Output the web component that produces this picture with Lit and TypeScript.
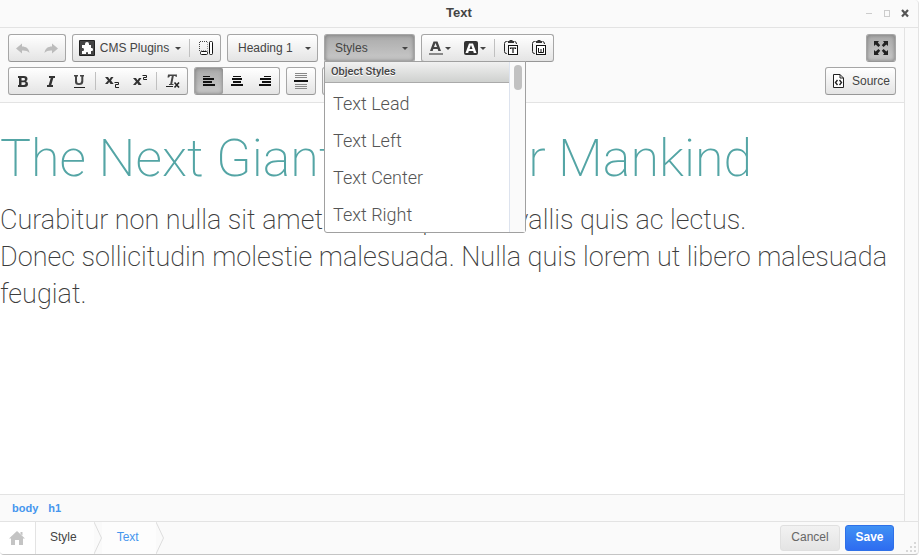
import { LitElement, html, css, svg, TemplateResult } from "lit";
import { customElement, property, state } from "lit/decorators.js";
import { classMap } from "lit/directives/class-map.js";

const bars = (rows: number[][], fill = "#111") =>
  rows.map(([x, y, w, h]) => svg`<rect x=${x} y=${y} width=${w} height=${h || 1} fill=${fill} />`);

const undoPath = "M1 8.5 7 3.5V6.5C11 6.500 14 8.500 14.500 13C12.500 10.800 10 10.300 7 10.500V13.500Z";
const fontA = "M5.500 1.500H9.500L13 11H10.300L9.700 9H5.300L4.700 11H2ZM6 7H9L7.500 3Z";
const clip = svg`<path d="M4.500 1.500H3.500Q1.500 1.500 1.500 3.500V11.500Q1.500 13.500 3.500 13.500H4M11.500 1.500Q13.500 1.500 13.500 4" fill="none" stroke="#222"/><path d="M5 1H6.500V0H9.500V1H11V3H5Z" fill="#333"/><rect x="5.500" y="5.500" width="9" height="9" fill="#fff" stroke="#111"/>`;

const icons: Record<string, TemplateResult> = {
  undo: svg`<path d=${undoPath} fill="#bcbcbc"/>`,
  redo: svg`<path d=${undoPath} fill="#bcbcbc" transform="matrix(-1 0 0 1 16 0)"/>`,
  plugin: svg`<rect width="16" height="16" rx="1" fill="#222"/><rect x="1" y="1" width="14" height="14" fill="#444"/><path d="M3 5H6V4Q6 2 8 2T10 4V5H12V8H13Q14 8 14 9.500T13 11H12V14H9V13Q9 12 8 12T7 13V14H3V11H4Q5 11 5 9.500T4 8H3Z" fill="#fff"/>`,
  blocks: svg`<path d="M1.500 11V1.500H9" fill="none" stroke="#444" stroke-dasharray="1 1"/><path d="M9.500 2V10.500H2" fill="none" stroke="#999" stroke-dasharray="1 1"/><rect x="2.500" y="11.500" width="7" height="3" rx="1" fill="#fff" stroke="#111"/><rect x="11.500" y="1.500" width="3" height="13" rx="1" fill="#fff" stroke="#111"/>`,
  bold: svg`<path fill-rule="evenodd" d="M3 3H9Q12.500 3 12.500 6Q12.500 7.500 11 8.200Q13 9 13 11Q13 14 9.500 14H3V12H4V5H3ZM6.500 5V7.500H8.500Q10 7.500 10 6.200T8.500 5ZM6.500 9.300V12H9Q10.500 12 10.500 10.600T9 9.300Z" fill="#333"/>`,
  italic: svg`<path d="M6 3H12V5H10.300L8.300 12H10V14H4V12H5.700L7.700 5H6Z" fill="#333"/>`,
  underline: svg`<path d="M3 2H7V3.500H6V8Q6 10.300 8 10.300T10.300 8V3.500H9V2H13V3.500H12.300V8.500Q12.300 12 8 12T4 8.500V3.500H3Z" fill="#444"/><rect x="3" y="14" width="11" height="1" fill="#222"/>`,
  sub: svg`<path d="M1 4H4L5.500 6.200 7 4H9.500L7 7.500 9.700 11H6.500L5.200 9 3.700 11H1L4 7.500Z" fill="#333"/><path d="M10.500 9.500H14.500V11.500H11.500V14.500H15" fill="none" stroke="#222"/>`,
  sup: svg`<path d="M1 5H4L5.500 7.200 7 5H9.500L7 8.500 9.700 12H6.500L5.200 10 3.700 12H1L4 8.500Z" fill="#333"/><path d="M10.500 2.500H14.500V4.500H11.500V6.500H15" fill="none" stroke="#222"/>`,
  clear: svg`<path d="M3 1.500H12L11.700 4H10.700L10.500 3H8.800L7.200 11H8.500V12H4V11H5.200L6.800 3H5L4 4.500H2.500Z" fill="#444"/><rect x="1" y="13" width="7" height="1" fill="#222"/><path d="M9.500 9.500 14 14.500M14 9.500 9.500 14.500" stroke="#222" stroke-width="1.600"/>`,
  left: bars([[2, 3, 7, 1], [2, 5, 11, 2], [2, 8, 9, 2], [2, 11, 12, 2]]),
  center: bars([[4, 3, 8, 1], [3, 5, 10, 2], [4, 8, 8, 2], [2, 11, 12, 2]]),
  right: bars([[7, 3, 7, 1], [3, 5, 11, 2], [5, 8, 9, 2], [2, 11, 12, 2]]),
  rule: svg`${bars([[2, 0, 12], [2, 2, 12], [2, 4, 12], [2, 11, 12], [2, 13, 12], [2, 15, 12]], "#888")}<rect x="1" y="7" width="14" height="2" fill="#111"/>`,
  color: svg`<path fill-rule="evenodd" d=${fontA} fill="#444"/><rect x="1" y="13" width="14" height="2" fill="#888"/>`,
  bgcolor: svg`<rect x="1" y="1" width="14" height="14" rx="2" fill="#333"/><path fill-rule="evenodd" d=${fontA} fill="#fff" transform="translate(.5 2)"/>`,
  pasteText: svg`${clip}<path d="M7.500 9V8H12.500V9M10 8V13" fill="none" stroke="#111" stroke-width="1.200"/>`,
  pasteWord: svg`${clip}<path d="M7.500 8V12.500H12.500V8M10 9V12" fill="none" stroke="#111"/>`,
  maximize: svg`<path d="M1 1H6L4.800 2.600 7.200 5.200 5.400 7 2.700 4.600 1 6ZM15 1H10L11.200 2.600 8.800 5.200 10.600 7 13.300 4.600 15 6ZM1 15H6L4.800 13.400 7.200 10.800 5.400 9 2.700 11.400 1 10ZM15 15H10L11.200 13.400 8.800 10.800 10.600 9 13.300 11.400 15 10Z" fill="#222"/>`,
  source: svg`<path d="M2.500 1.500H9L12.500 5V14.500H2.500Z" fill="#fff" stroke="#222"/><path d="M9 1.500V5H12.500" fill="none" stroke="#222"/><path d="M6.500 7 4.500 9.500 6.500 12M8.500 7 10.500 9.500 8.500 12" fill="none" stroke="#222" stroke-width="1.400"/>`,
  home: svg`<path d="M8 1 16 8.500H14V15H10V10H6V15H2V8.500H0ZM11.500 2H13.500V5.500L11.500 4Z" fill="#c4c4c4"/>`,
  minimize: svg`<rect x="5" y="8" width="6" height="1" fill="#ccc"/>`,
  restore: svg`<rect x="5.500" y="5.500" width="5" height="6" fill="none" stroke="#ccc"/>`,
  close: svg`<path d="M5 5 11 11.500M11 5 5 11.500" stroke="#555" stroke-width="2.200"/>`,
};

@customElement("ui-icon")
export class UiIcon extends LitElement {
  @property() name = "";
  static styles = css`
    :host { display: block; flex: none; width: 16px; height: 16px; }
    .glyph { display: block; }
  `;
  render() {
    return html`<svg class="glyph" width="16" height="16" viewBox="0 0 16 16" aria-hidden="true">${icons[this.name]}</svg>`;
  }
}

@customElement("app-root")
export class AppRoot extends LitElement {
  @state() private stylesOpen = true;

  static styles = css`
    :host { display: block; font: 12px/16px "Liberation Sans", Arial, sans-serif; color: #444; }
    * { box-sizing: border-box; }
    button, select { font: inherit; color: inherit; margin: 0; cursor: pointer; }
    .window { min-height: 100vh; display: flex; flex-direction: column; background: #fafafa; border-right: 1px solid #e3e3e3; border-bottom: 1px solid #c4c4c4; border-radius: 0 4px 4px 4px; overflow: hidden; }
    .titlebar { display: grid; grid-template-columns: 1fr auto 1fr; align-items: center; height: 28px; padding-bottom: 1px; border-bottom: 1px solid #e3e3e3; }
    .title { grid-column: 2; margin: 0; font-size: 13px; font-weight: bold; }
    .controls { justify-self: end; display: flex; gap: 2px; padding-right: 5px; }
    .plain { border: 0; padding: 0; background: none; }
    .main { flex: 1; display: flex; flex-direction: column; margin-right: 13px; border-right: 1px solid #e3e3e3; }
    .toolbar { display: flex; flex-direction: column; gap: 5px; padding: 6px 8px 7px; border-bottom: 1px solid #e3e3e3; }
    .row { display: flex; gap: 6px; height: 28px; }
    .group { display: flex; border: 1px solid #a6a6a6; border-bottom-color: #979797; border-radius: 3px; background: linear-gradient(#fff, #e4e4e4); position: relative; }
    .end { margin-left: auto; }
    .tool { display: flex; align-items: center; justify-content: center; gap: 5px; width: 28px; height: 26px; padding: 0; border: 0; background: none; white-space: nowrap; }
    .sep { width: 1px; margin: 4px 2px; background: #c0c0c0; }
    .wide { width: 114px; }
    .drop { width: 35px; gap: 1px; padding-right: 1px; }
    .combo { width: 89px; justify-content: space-between; padding: 0 6px 0 10px; }
    .source { width: 69px; }
    .on { background: linear-gradient(#aaa, #c9c9c9); box-shadow: inset 0 0 4px #777; border-radius: 2px; }
    .arrow { border: 3px solid transparent; border-top-color: #444; border-bottom: 0; }
    .wide .arrow { margin-left: 1px; }
    .select { display: flex; align-items: center; padding-right: 6px; }
    .format { appearance: none; width: 77px; height: 26px; border: 0; outline: 0; padding: 0 0 0 10px; background: none; }
    .panel { position: absolute; z-index: 2; top: 26px; left: -1px; width: 202px; height: 172px; display: flex; background: #fff; border: 1px solid #a0a0a0; border-radius: 0 0 3px 3px; font-family: Roboto, sans-serif; }
    .list { flex: 1; overflow: hidden; border-right: 1px solid #dde3ee; }
    .caption { margin: 0; height: 21px; padding: 0 6px; border-bottom: 1px solid #aaa; background: linear-gradient(#f1f1f1, #cfd1cf); font-size: 11px; line-height: 20px; font-weight: 500; text-shadow: 0 1px 0 #fff; }
    .options { margin: 0; padding: 2px 0 0; list-style: none; }
    .option { height: 37px; padding: 0 8px; font-size: 18px; line-height: 37px; font-weight: 300; color: #555; }
    .track { width: 15px; padding: 3px; background: #fafafa; }
    .thumb { width: 8px; height: 25px; border-radius: 4px; background: #c1c1c1; margin: 0 auto; }
    .editor { flex: 1; background: #fff; padding-top: 21px; font-family: Roboto, sans-serif; color: #3c3c3c; }
    .headline { margin: 0; font-size: 52px; line-height: 70px; font-weight: 200; color: #54a5a5; }
    .copy { margin: 8px 0 0; font-size: 27px; line-height: 37px; font-weight: 200; }
    .path { display: flex; align-items: center; gap: 10px; height: 27px; padding: 0 12px; border-top: 1px solid #e3e3e3; font-size: 11px; font-weight: bold; }
    .link { color: #4596ee; text-decoration: none; }
    .footer { display: flex; align-items: center; height: 33px; border-top: 1px solid #e3e3e3; position: relative; }
    .crumbs { display: flex; align-self: stretch; }
    .crumb { display: flex; align-items: center; padding: 0 17px 2px 14px; text-decoration: none; color: #444; background: #fdfdfd; }
    .crumb.home { width: 36px; padding: 0 9px; background: #fff; border-right: 1px solid #e3e3e3; }
    .crumb.current { color: #4596ee; padding-left: 15px; }
    .chevron { display: block; width: 8px; height: 32px; }
    .actions { display: flex; gap: 5px; margin-left: auto; padding-right: 24px; }
    .action { height: 26px; width: 60px; border: 1px solid #e0e0e0; border-radius: 3px; padding: 0 0 2px; background: linear-gradient(#f2f2f2, #e4e4e4); color: #666; }
    .save { width: 49px; border-color: #2e70e8; background: linear-gradient(#4091f4, #2e6cf0); color: #fff; font-weight: bold; }
    .grip { position: absolute; right: 2px; bottom: 2px; }
  `;

  private tool(name: string, label: string, on = false) {
    return html`<button class=${classMap({ tool: true, on })} title=${label} aria-label=${label}><ui-icon name=${name}></ui-icon></button>`;
  }

  private colorTool(name: string, label: string) {
    return html`<button class="tool drop" title=${label} aria-label=${label}><ui-icon name=${name}></ui-icon><span class="arrow"></span></button>`;
  }

  private chevron() {
    return html`<svg class="chevron" width="8" height="32" viewBox="0 0 8 32" aria-hidden="true"><path d="M0 0 7.500 16 0 32" fill="none" stroke="#ddd"/></svg>`;
  }

  private panel() {
    return html`<div class="panel">
      <div class="list">
        <p class="caption" id="caption">Object Styles</p>
        <ul class="options" role="listbox" aria-labelledby="caption">
          ${["Text Lead", "Text Left", "Text Center", "Text Right"].map((t) => html`<li class="option" role="option">${t}</li>`)}
        </ul>
      </div>
      <div class="track"><div class="thumb"></div></div>
    </div>`;
  }

  render() {
    const sep = html`<span class="sep"></span>`;
    return html`<div class="window">
      <header class="titlebar">
        <h2 class="title">Text</h2>
        <div class="controls">
          ${["minimize", "restore", "close"].map((n) => html`<button class="plain" aria-label=${n}><ui-icon name=${n}></ui-icon></button>`)}
        </div>
      </header>
      <main class="main">
        <div class="toolbar" role="toolbar">
          <div class="row">
            <div class="group">${this.tool("undo", "Undo")}${this.tool("redo", "Redo")}</div>
            <div class="group">
              <button class="tool wide"><ui-icon name="plugin"></ui-icon>CMS Plugins<span class="arrow"></span></button>
              ${sep}${this.tool("blocks", "Show blocks")}
            </div>
            <div class="group select">
              <select class="format" aria-label="Paragraph format"><option>Heading 1</option></select>
              <span class="arrow"></span>
            </div>
            <div class="group">
              <button class=${classMap({ tool: true, combo: true, on: this.stylesOpen })} aria-haspopup="listbox"
                aria-expanded=${this.stylesOpen} @click=${() => (this.stylesOpen = !this.stylesOpen)}>Styles<span class="arrow"></span></button>
              ${this.stylesOpen ? this.panel() : null}
            </div>
            <div class="group">
              ${this.colorTool("color", "Text color")}${this.colorTool("bgcolor", "Background color")}${sep}
              ${this.tool("pasteText", "Paste as text")}${this.tool("pasteWord", "Paste from Word")}
            </div>
            <div class="group end">${this.tool("maximize", "Maximize", true)}</div>
          </div>
          <div class="row">
            <div class="group">
              ${this.tool("bold", "Bold")}${this.tool("italic", "Italic")}${this.tool("underline", "Underline")}${sep}
              ${this.tool("sub", "Subscript")}${this.tool("sup", "Superscript")}${sep}${this.tool("clear", "Remove format")}
            </div>
            <div class="group">${this.tool("left", "Align left", true)}${this.tool("center", "Center")}${this.tool("right", "Align right")}</div>
            <div class="group">${this.tool("rule", "Horizontal line")}</div>
            <div class="group">${this.tool("left", "List")}${this.tool("right", "Indent")}</div>
            <div class="group end"><button class="tool source"><ui-icon name="source"></ui-icon>Source</button></div>
          </div>
        </div>
        <article class="editor">
          <h1 class="headline">The Next Giant Leap For Mankind</h1>
          <p class="copy">Curabitur non nulla sit amet nisl tempus convallis quis ac lectus.<br />Donec sollicitudin molestie malesuada. Nulla quis lorem ut libero malesuada feugiat.</p>
        </article>
        <nav class="path" aria-label="Element path"><a class="link" href="#body">body</a><a class="link" href="#h1">h1</a></nav>
      </main>
      <footer class="footer">
        <nav class="crumbs" aria-label="Breadcrumb">
          <a class="crumb home" href="#home" aria-label="Home"><ui-icon name="home"></ui-icon></a>
          <a class="crumb" href="#style">Style</a>${this.chevron()}
          <a class="crumb current" href="#text">Text</a>${this.chevron()}
        </nav>
        <div class="actions"><button class="action">Cancel</button><button class="action save">Save</button></div>
        <svg class="grip" width="10" height="10" viewBox="0 0 10 10" aria-hidden="true">${bars([[8, 0, 2, 2], [4, 4, 2, 2], [8, 4, 2, 2], [0, 8, 2, 2], [4, 8, 2, 2], [8, 8, 2, 2]], "#d8d8d8")}</svg>
      </footer>
    </div>`;
  }
}
